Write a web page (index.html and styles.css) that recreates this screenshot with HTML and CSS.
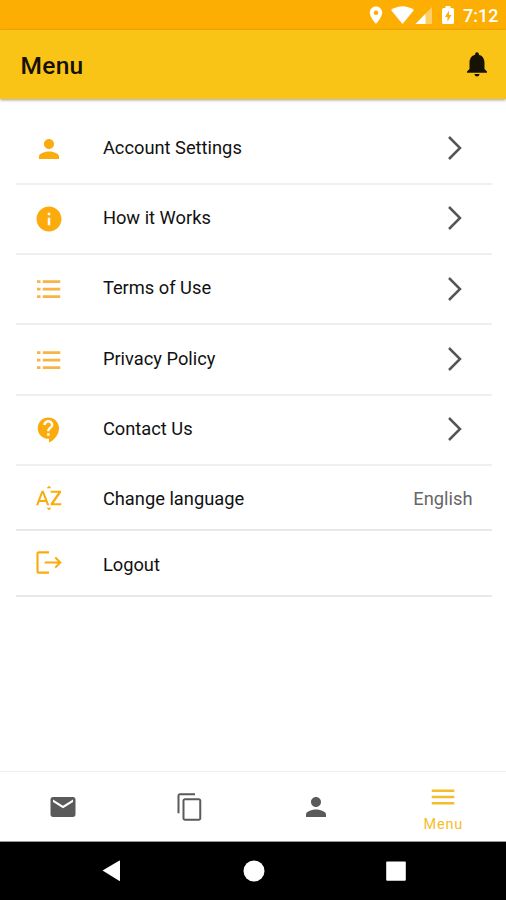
FILE: index.html
```html
<!DOCTYPE html>
<html lang="en">
<head>
<meta charset="utf-8">
<title>Menu</title>
<link rel="stylesheet" href="styles.css">
</head>
<body>
<div class="screen">
  <div class="status">
    <svg class="status-icons" viewBox="0 0 92 20" width="92" height="20">
      <path fill="#fff" fill-rule="evenodd" d="M7 1.5C3.5 1.5.8 4.2.8 7.600C.8 12.300 7 19 7 19s6.200-6.700 6.200-11.400C13.200 4.200 10.500 1.500 7 1.500zM7 5.500a2.300 2.300 0 1 1 0 4.600a2.300 2.300 0 0 1 0-4.600z"/>
      <path fill="#fff" d="M22 5Q33.500-2.500 45 5L33.500 19z"/>
      <path fill="#fff" fill-opacity=".4" d="M63 2v17H46.500z"/>
      <path fill="#fff" d="M56.500 8.700V19H46.500z"/>
      <path fill="#fff" fill-rule="evenodd" d="M76.500 1h5v2h2q1.500 0 1.500 1.500v13q0 1.500-1.500 1.500h-9q-1.500 0-1.500-1.500v-13q0-1.500 1.500-1.500h2zM80 5.500L76 12h2.500v4.500L82.500 10H80z"/>
    </svg>
    <span class="clock">7:12</span>
  </div>
  <header class="appbar">
    <h1>Menu</h1>
    <svg class="bell" viewBox="0 0 24 24"><path d="M12 22c1.100 0 2-.9 2-2h-4c0 1.100.9 2 2 2zm6-6v-5c0-3.070-1.640-5.640-4.500-6.320V4c0-.83-.67-1.500-1.500-1.500s-1.500.67-1.500 1.500v.68C7.630 5.360 6 7.920 6 11v5l-2 2v1h16v-1l-2-2z"/></svg>
  </header>
  <main class="list">
    <div class="row">
      <svg class="icon" viewBox="0 0 24 24"><path d="M12 12c2.210 0 4-1.790 4-4s-1.790-4-4-4-4 1.790-4 4 1.790 4 4 4zm0 2c-2.670 0-8 1.340-8 4v2h16v-2c0-2.660-5.330-4-8-4z"/></svg>
      <span class="label">Account Settings</span>
      <svg class="chevron" viewBox="0 0 14 24"><path d="M1 1l11 11L1 23"/></svg>
    </div>
    <div class="row">
      <svg class="icon" viewBox="0 0 24 24"><path d="M12 2C6.480 2 2 6.480 2 12s4.480 10 10 10 10-4.480 10-10S17.520 2 12 2zm1 15h-2v-6h2v6zm0-8h-2V7h2v2z"/></svg>
      <span class="label">How it Works</span>
      <svg class="chevron" viewBox="0 0 14 24"><path d="M1 1l11 11L1 23"/></svg>
    </div>
    <div class="row">
      <svg class="icon soft" viewBox="0 0 24 24"><path d="M2.400 5h2.800v2.200H2.400zM2.400 11h2.800v2.200H2.400zM2.400 17h2.800v2.200H2.400zM7 5h14v2.200H7zM7 11h14v2.200H7zM7 17h14v2.200H7z"/></svg>
      <span class="label">Terms of Use</span>
      <svg class="chevron" viewBox="0 0 14 24"><path d="M1 1l11 11L1 23"/></svg>
    </div>
    <div class="row">
      <svg class="icon soft" viewBox="0 0 24 24"><path d="M2.400 5h2.800v2.200H2.400zM2.400 11h2.800v2.200H2.400zM2.400 17h2.800v2.200H2.400zM7 5h14v2.200H7zM7 11h14v2.200H7zM7 17h14v2.200H7z"/></svg>
      <span class="label">Privacy Policy</span>
      <svg class="chevron" viewBox="0 0 14 24"><path d="M1 1l11 11L1 23"/></svg>
    </div>
    <div class="row">
      <svg class="icon" viewBox="0 0 24 24"><path d="M11.500 2C6.810 2 3 5.810 3 10.500S6.810 19 11.500 19h.5v3c4.860-2.340 8-7 8-11.500C20 5.810 16.190 2 11.500 2zm1 14.500h-2v-2h2v2zm0-3.500h-2c0-3.250 3-3 3-5 0-1.100-.9-2-2-2s-2 .9-2 2h-2c0-2.210 1.790-4 4-4s4 1.790 4 4c0 2.500-3 2.750-3 5z"/></svg>
      <span class="label">Contact Us</span>
      <svg class="chevron" viewBox="0 0 14 24"><path d="M1 1l11 11L1 23"/></svg>
    </div>
    <div class="row short">
      <svg class="icon" viewBox="0 0 24 24"><path d="M14 4.200h-4l2-2zM10 19.800h4l-2 2zM6.100 6.270L1.600 17.730h1.840l.92-2.450h5.110l.92 2.450h1.840L7.740 6.270H6.100zm-1.130 7.370l1.940-5.180 1.940 5.180H4.970zm10.760 2.500h6.120v1.590h-8.530v-1.290l5.920-8.560h-5.880v-1.600h8.300v1.260l-5.930 8.600z"/></svg>
      <span class="label">Change language</span>
      <span class="value">English</span>
    </div>
    <div class="row short">
      <svg class="icon line" viewBox="0 0 24 24"><path d="M12 3.500H3.800Q2.800 3.500 2.800 4.500V18.700Q2.800 19.700 3.800 19.700H12M8.500 11.600H21M17 7.500L21 11.600L17 15.700"/></svg>
      <span class="label">Logout</span>
    </div>
  </main>
  <nav class="tabs">
    <div class="tab"><svg class="tab-icon" viewBox="0 0 24 24"><path d="M20 4H4c-1.100 0-2 .9-2 2v12c0 1.100.9 2 2 2h16c1.100 0 2-.9 2-2V6c0-1.100-.9-2-2-2zm0 4l-8 5-8-5V6l8 5 8-5v2z"/></svg></div>
    <div class="tab"><svg class="tab-icon" viewBox="0 0 24 24"><path d="M16 1H4c-1.100 0-2 .9-2 2v14h1.600V2.600H16V1zm3 4H8c-1.100 0-2 .9-2 2v14c0 1.100.9 2 2 2h11c1.100 0 2-.9 2-2V7c0-1.100-.9-2-2-2zm.4 16.400H7.600V6.600h11.800v14.800z"/></svg></div>
    <div class="tab"><svg class="tab-icon" viewBox="0 0 24 24"><path d="M12 12c2.210 0 4-1.790 4-4s-1.790-4-4-4-4 1.790-4 4 1.790 4 4 4zm0 2c-2.670 0-8 1.340-8 4v2h16v-2c0-2.660-5.330-4-8-4z"/></svg></div>
    <div class="tab active"><svg class="tab-icon" viewBox="0 0 24 24"><path d="M3 18h18v-2H3v2zm0-5h18v-2H3v2zm0-7v2h18V6H3z"/></svg><span>Menu</span></div>
  </nav>
  <footer class="sysnav">
    <svg viewBox="0 0 24 24"><path d="M3.500 11.500L20.500 1.500Q21 1.300 21 2V21.500Q21 22.200 20.500 22z"/></svg>
    <svg viewBox="0 0 24 24"><circle cx="12" cy="12" r="10.500"/></svg>
    <svg viewBox="0 0 24 24"><rect x="2.200" y="2.500" width="19.600" height="19.300" rx="1"/></svg>
  </footer>
</div>
</body>
</html>
```
FILE: styles.css
```css
* { box-sizing: border-box; }
body { margin: 0; background: #fff; font-family: Roboto, "Liberation Sans", sans-serif; color: #111; }
.screen { width: 506px; height: 900px; display: flex; flex-direction: column; overflow: hidden; }
svg { display: block; flex: none; }
.status { height: 30px; flex: none; background: #fdae02; display: flex; justify-content: flex-end; align-items: center; padding: 0 9px 0 0; }
.status-icons { margin: 0; }
.clock { width: 34px; margin-left: 2px; margin-top: 2px; font-size: 18px; font-weight: 500; line-height: 20px; color: #fff; white-space: nowrap; }
.appbar { height: 69px; flex: none; background: #fac416; display: flex; align-items: center; justify-content: space-between; padding: 1px 14px 0 20.500px; box-shadow: 0 1px 3px rgba(0, 0, 0, .4); }
h1 { margin: 2px 0 0; font-size: 24.500px; font-weight: 500; line-height: 30px; letter-spacing: .3px; color: #151103; }
.bell { width: 30px; height: 30px; margin-top: -2px; fill: #171303; }
.list { flex: 1; padding: 15.500px 14px 0 16px; }
.row { height: 70.300px; border-bottom: 2px solid #efefef; display: flex; align-items: center; padding-left: 18.400px; }
.row.short { height: 65.500px; border-bottom-color: #e8e8e8; }
.icon { width: 30px; height: 30px; fill: #fbab0b; }
.icon.soft { fill: #f7b547; }
.icon.line { fill: none; stroke: #fbab0b; stroke-width: 1.700; }
.label { flex: 1; margin-left: 38.500px; font-size: 18.300px; line-height: 24px; margin-top: -2px; }
.short .label { margin-top: 3px; }
.chevron { width: 14px; height: 24px; margin: -1px 30.500px 0 0; fill: none; stroke: #555; stroke-width: 2.500; }
.value { margin: 3px 19.500px 0 0; font-size: 18.300px; line-height: 24px; color: #666; }
.tabs { height: 71px; flex: none; border-top: 1px solid #eee; border-bottom: 1px solid #999; display: grid; grid-template-columns: repeat(4, 1fr); }
.tab { display: flex; flex-direction: column; align-items: center; justify-content: center; fill: #5a5a5a; }
.tab-icon { width: 30px; height: 30px; }
.active { fill: #f5bd2b; color: #f5bd2b; padding: 2px 0 0 1px; }
.active .tab-icon { margin-bottom: 4px; }
.active span { font-size: 14.500px; line-height: 18px; letter-spacing: .8px; }
.sysnav { height: 58px; flex: none; background: #000; display: flex; justify-content: space-between; padding: 17px 98px 0 99px; }
.sysnav svg { width: 24px; height: 24px; fill: #fff; }
```
